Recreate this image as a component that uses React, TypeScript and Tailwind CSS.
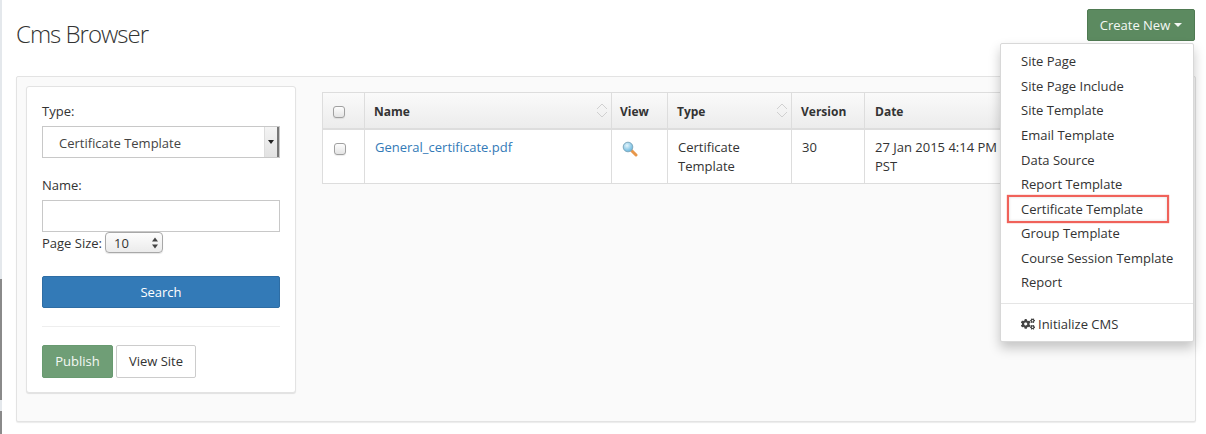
import { FaCogs } from "react-icons/fa";

const items = ["Site Page", "Site Page Include", "Site Template", "Email Template", "Data Source", "Report Template", "Certificate Template", "Group Template", "Course Session Template", "Report"];

function Sort() {
  return (
    <svg width="12" height="15" viewBox="0 0 12 15" fill="none" stroke="#d0d0d0" strokeWidth="1" className="shrink-0 -mt-[2px]">
      <path d="M1 6 6 1l5 5" />
      <path d="M1 9l5 5 5-5" />
    </svg>
  );
}

function Check() {
  return <span className="block w-[12px] h-[12px] rounded-[3px] border border-[#a0a0a0] bg-gradient-to-b from-[#fdfdfd] to-[#e4e4e4] shadow-[0_1px_1px_rgba(0,0,0,0.08)]" />;
}

function Magnifier() {
  return (
    <svg width="16" height="16" viewBox="0 0 16 16">
      <defs>
        <radialGradient id="lens" cx="0.4" cy="0.35" r="0.7">
          <stop offset="0" stopColor="#e4f5fc" />
          <stop offset="1" stopColor="#5fb2dc" />
        </radialGradient>
      </defs>
      <path d="M9.5 9.5 14 14" stroke="#e8974a" strokeWidth="3" strokeLinecap="round" />
      <circle cx="6" cy="6" r="4.8" fill="url(#lens)" stroke="#7fa9bd" strokeWidth="1" />
    </svg>
  );
}

export default function App() {
  return (
    <div className="w-[1206px] h-[434px] overflow-hidden flex bg-white text-[13px] leading-[20px] text-[#333] font-['Open_Sans',sans-serif]">
      <div className="w-[2px] shrink-0 flex flex-col">
        <div className="h-[279px] bg-[#e4e8ec]" />
        <div className="h-[121px] bg-[#8a8a8a]" />
        <div className="h-[11px] bg-[#e4e8ec]" />
        <div className="flex-1 bg-[#8a8a8a]" />
      </div>
      <div className="w-[1204px] pl-[14px] pr-[11px] relative">
        <div className="h-[76px] flex justify-between items-start">
          <h1 className="mt-[19px] text-[24px] leading-[29px] font-light text-[#333] tracking-[-1px]">Cms Browser</h1>
          <button className="mt-[9px] w-[108px] h-[32px] rounded-[2px] border border-[#4f7a52] bg-[#5c8a60] text-[#f4f8f4] flex items-center justify-center gap-[4px]">
            Create New
            <span className="w-0 h-0 border-x-[4px] border-x-transparent border-t-[4px] border-t-[#f4f8f4]" />
          </button>
        </div>

        <div className="h-[346px] w-[1180px] rounded-[2px] border border-[#e3e3e3] bg-[#fafafa] shadow-[0_1px_1px_rgba(0,0,0,0.08)] p-[9px] flex gap-[26px] items-start">
          <div className="w-[270px] h-[307px] shrink-0 rounded-[3px] border border-[#e3e3e3] bg-white shadow-[0_1px_1px_rgba(0,0,0,0.1)] px-[15px] pt-[14px]">
            <div className="h-[20px]">Type:</div>
            <div className="mt-[5px] h-[32px] border border-[#c8c8c8] flex items-center justify-between pl-[16px]">
              <span className="text-[#444] pt-[2px]">Certificate Template</span>
              <span className="w-[15px] h-[30px] flex items-center justify-center bg-gradient-to-b from-[#f4f4f4] to-[#e2e2e2] border-r-2 border-r-[#777] border-l border-l-[#ddd]">
                <span className="w-0 h-0 border-x-[3px] border-x-transparent border-t-[4px] border-t-[#222]" />
              </span>
            </div>
            <div className="mt-[17px] h-[20px]">Name:</div>
            <div className="mt-[5px] h-[32px] border border-[#c8c8c8] bg-white" />
            <div className="h-[21px] flex items-center gap-[3px]">
              <span>Page Size:</span>
              <span className="w-[58px] h-[21px] rounded-[4px] border border-[#a8a8a8] bg-gradient-to-b from-[#fdfdfd] to-[#ebebeb] flex items-center justify-between pl-[8px] pr-[3px] shadow-[0_1px_1px_rgba(0,0,0,0.1)]">
                <span className="text-[13px] text-[#333]">10</span>
                <svg width="8" height="12" viewBox="0 0 8 12" fill="#444"><path d="M4 0.5 7 4.5H1zM4 11.5 1 7.5H7z" /></svg>
              </span>
            </div>
            <button className="mt-[23px] w-full h-[32px] rounded-[2px] border border-[#2e6da4] bg-[#337ab7] text-white">Search</button>
            <div className="mt-[18px] border-t border-[#eee]" />
            <div className="mt-[18px] flex gap-[3px]">
              <button className="w-[71px] h-[33px] rounded-[2px] border border-[#689a70] bg-[#6f9e76] text-[#f4f8f4] pb-[2px]">Publish</button>
              <button className="w-[80px] h-[33px] rounded-[2px] border border-[#ccc] bg-white text-[#333] pb-[2px]">View Site</button>
            </div>
          </div>

          <div className="mt-[6px] w-[863px] shrink-0">
            <div className="grid grid-cols-[41px_247px_56px_124px_73px_321px] border border-[#ddd] bg-white text-[#333]">
              <div className="h-[37px] pt-[2px] border-b-[2px] border-[#ddd] bg-gradient-to-b from-[#fafafa] to-[#ececec] flex items-center pl-[10px]"><Check /></div>
              <div className="h-[37px] pt-[2px] border-b-[2px] border-l border-[#ddd] bg-gradient-to-b from-[#fafafa] to-[#ececec] flex items-center justify-between pl-[9px] pr-[3px] text-[12px] font-bold"><span>Name</span><Sort /></div>
              <div className="h-[37px] pt-[2px] border-b-[2px] border-l border-[#ddd] bg-gradient-to-b from-[#fafafa] to-[#ececec] flex items-center pl-[8px] text-[12px] font-bold">View</div>
              <div className="h-[37px] pt-[2px] border-b-[2px] border-l border-[#ddd] bg-gradient-to-b from-[#fafafa] to-[#ececec] flex items-center justify-between pl-[9px] pr-[3px] text-[12px] font-bold"><span>Type</span><Sort /></div>
              <div className="h-[37px] pt-[2px] border-b-[2px] border-l border-[#ddd] bg-gradient-to-b from-[#fafafa] to-[#ececec] flex items-center pl-[9px] text-[12px] font-bold">Version</div>
              <div className="h-[37px] pt-[2px] border-b-[2px] border-l border-[#ddd] bg-gradient-to-b from-[#fafafa] to-[#ececec] flex items-center pl-[10px] text-[12px] font-bold">Date</div>

              <div className="h-[53px] pl-[11px] pt-[13px]"><Check /></div>
              <div className="h-[53px] border-l border-[#ddd] pl-[10px] pt-[7px] text-[#337ab7]">General_certificate.pdf</div>
              <div className="h-[53px] border-l border-[#ddd] pl-[10px] pt-[11px]"><Magnifier /></div>
              <div className="h-[53px] border-l border-[#ddd] pl-[10px] pt-[8px] leading-[19px]">Certificate<br />Template</div>
              <div className="h-[53px] border-l border-[#ddd] pl-[10px] pt-[8px] leading-[19px]">30</div>
              <div className="h-[53px] border-l border-[#ddd] pl-[10px] pt-[8px] leading-[19px]">27 Jan 2015 4:14 PM<br />PST</div>
            </div>
          </div>
        </div>

        <div className="absolute left-[998px] top-[43px] w-[194px] h-[299px] rounded-[2px] border border-[#d8d8d8] bg-white shadow-[0_6px_12px_rgba(0,0,0,0.22)] pt-[5.35px] pl-[20px]">
          {items.map((t) => (
            <div key={t} className="h-[24.55px] leading-[24px] whitespace-nowrap text-[#333]">{t}</div>
          ))}
          <div className="-ml-[20px] mt-[8.65px] border-t border-[#e5e5e5]" />
          <div className="mt-[8px] h-[24px] flex items-center gap-[3px] text-[#333]">
            <FaCogs size={14} className="text-[#444]" />
            <span>Initialize CMS</span>
          </div>
        </div>

        <div className="absolute left-[1005px] top-[195px] w-[162px] h-[28px] border-2 border-[#f0625a] shadow-[0_0_1px_#f0625a,inset_0_0_3px_rgba(0,0,0,0.15)]" />
      </div>
    </div>
  );
}
